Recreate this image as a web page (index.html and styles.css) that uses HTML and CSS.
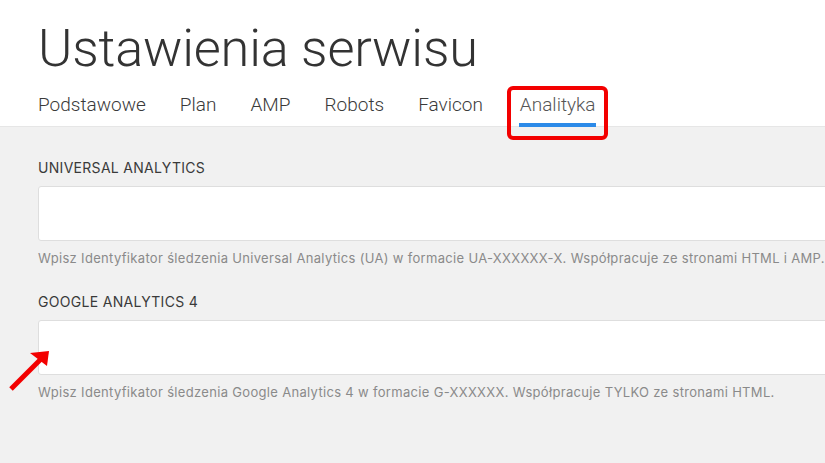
FILE: index.html
```html
<!DOCTYPE html>
<html lang="pl">
<head>
<meta charset="utf-8">
<title>Ustawienia serwisu</title>
<link rel="stylesheet" href="styles.css">
</head>
<body>
<header class="header">
  <h1 class="title">Ustawienia serwisu</h1>
  <nav class="tabs">
    <a class="tab">Podstawowe</a>
    <a class="tab">Plan</a>
    <a class="tab">AMP</a>
    <a class="tab">Robots</a>
    <a class="tab">Favicon</a>
    <a class="tab tab-active">Analityka<span class="highlight"></span></a>
  </nav>
</header>
<main class="content">
  <div class="field">
    <label class="label">UNIVERSAL ANALYTICS</label>
    <input class="input" type="text">
    <p class="hint">Wpisz Identyfikator śledzenia Universal Analytics (UA) w formacie UA-XXXXXX-X. Współpracuje ze stronami HTML i AMP.</p>
  </div>
  <div class="field field-ga4">
    <label class="label">GOOGLE ANALYTICS 4</label>
    <input class="input" type="text">
    <p class="hint">Wpisz Identyfikator śledzenia Google Analytics 4 w formacie G-XXXXXX. Współpracuje TYLKO ze stronami HTML.</p>
    <svg class="arrow" width="56" height="50" viewBox="0 0 56 50">
      <line x1="11" y1="44" x2="41" y2="14" stroke="#f30000" stroke-width="5"/>
      <polygon points="30,8 49,6 47,21" fill="#f30000"/>
    </svg>
  </div>
</main>
</body>
</html>
```
FILE: styles.css
```css
html, body {
  margin: 0;
  padding: 0;
  background: #f1f1f1;
  overflow: hidden;
}
body {
  width: 825px;
  height: 463px;
}
.header {
  background: #fff;
  padding: 0 0 0 38px;
  border-bottom: 1px solid #e6e6e6;
  height: 126px;
  box-sizing: content-box;
}
.title {
  margin: 0;
  padding-top: 18px;
  font-family: Roboto, sans-serif;
  font-weight: 300;
  font-size: 52.3px;
  line-height: 60px;
  color: #333;
  letter-spacing: -0.2px;
}
.tabs {
  display: flex;
  gap: 34px;
  margin-top: 16px;
}
.tab {
  position: relative;
  font-family: Roboto, sans-serif;
  font-weight: 300;
  font-size: 19px;
  line-height: 22px;
  color: #3a3a3a;
  padding-bottom: 11px;
}
.tab-active {
  color: #555;
  margin-left: 3px;
}
.tab-active::after {
  content: "";
  position: absolute;
  left: -1px;
  right: 0;
  bottom: 0;
  height: 4px;
  background: #2b8ae8;
}
.highlight {
  position: absolute;
  left: -13px;
  right: -12px;
  top: -8px;
  bottom: -13px;
  border: 4px solid #f30000;
  border-radius: 6px;
}
.content {
  padding: 32px 0 0 38px;
}
.field {
  position: relative;
  font-family: Inter, "Noto Sans", sans-serif;
}
.field-ga4 {
  margin-top: 27px;
}
.label {
  display: block;
  font-size: 14px;
  line-height: 17px;
  color: #3a3a3a;
  letter-spacing: 0.3px;
  margin-bottom: 10px;
}
.input {
  display: block;
  width: 800px;
  height: 55px;
  box-sizing: border-box;
  border: 1px solid #dedede;
  border-radius: 3px;
  background: #fff;
  margin: 0;
}
.hint {
  margin: 9px 0 0;
  font-size: 13px;
  line-height: 16px;
  color: #8a8a8a;
  letter-spacing: 0.32px;
  white-space: nowrap;
}
.arrow {
  position: absolute;
  left: -38px;
  top: 52px;
}
```
